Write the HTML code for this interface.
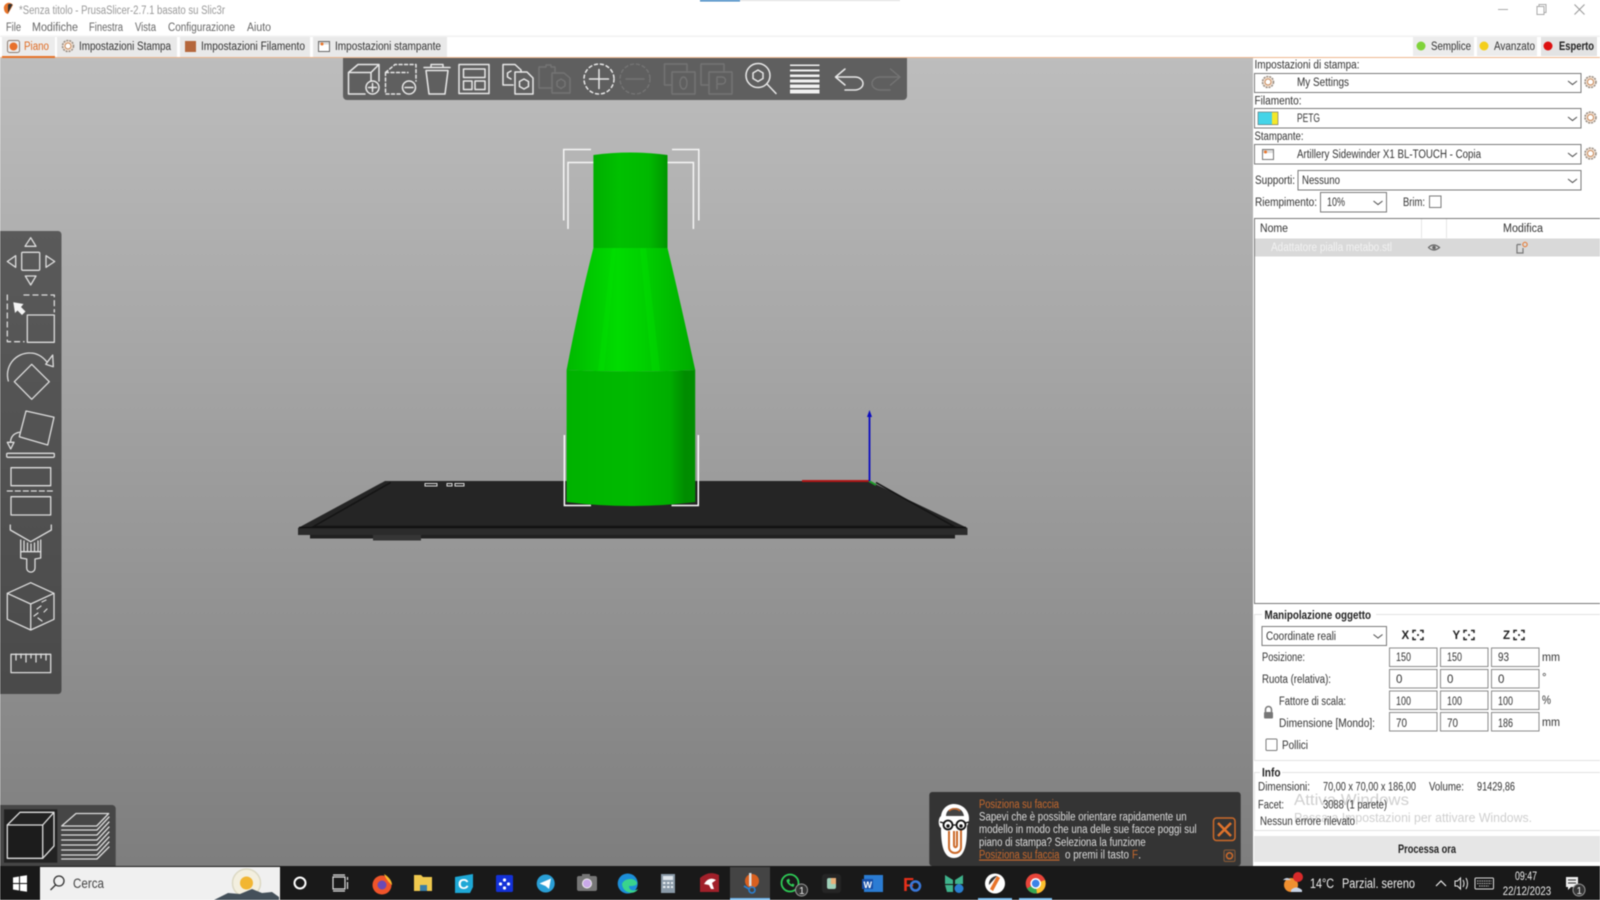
<!DOCTYPE html>
<html><head><meta charset="utf-8"><title>PrusaSlicer</title>
<style>
html,body{margin:0;padding:0;background:#fff;width:1600px;height:900px;overflow:hidden}
svg{display:block;filter:blur(.4px)}
text{font-family:"Liberation Sans",sans-serif;font-size:11.5px;fill:#333}
.m{fill:#666}
.b{font-weight:bold;fill:#222}
.n{fill:#ddd}
.o{fill:#c8692c}
.tb{fill:#eee;font-size:13.5px}
.w{fill:none;stroke:#e8e8e8;stroke-width:1.5;stroke-linejoin:round;stroke-linecap:round}
.d{fill:none;stroke:#747474;stroke-width:1.4;stroke-linejoin:round;stroke-linecap:round}
.l{fill:none;stroke:#ddd;stroke-width:1.3;stroke-linejoin:round;stroke-linecap:round}
.ib{fill:#fff;stroke:#8a8a8a;stroke-width:1}
.cb{fill:#fff;stroke:#7a7a7a;stroke-width:1}
.ch{fill:none;stroke:#555;stroke-width:1.1}
</style></head><body>
<svg width="1600" height="900" viewBox="0 0 1600 900" xmlns="http://www.w3.org/2000/svg">
<defs>
<linearGradient id="bg" x1="0" y1="0" x2="0" y2="1"><stop offset="0" stop-color="#bdbdbd"/><stop offset="1" stop-color="#7e7e7e"/></linearGradient>
<linearGradient id="ltb" x1="0" y1="0" x2="0" y2="1"><stop offset="0" stop-color="#5a5a5a"/><stop offset="1" stop-color="#4a4a4a"/></linearGradient>
<linearGradient id="c1"><stop offset="0" stop-color="#00ae00"/><stop offset=".35" stop-color="#00c000"/><stop offset=".75" stop-color="#00b800"/><stop offset=".93" stop-color="#00a000"/><stop offset="1" stop-color="#009400"/></linearGradient>
<linearGradient id="c2"><stop offset="0" stop-color="#00b800"/><stop offset=".22" stop-color="#00cc00"/><stop offset=".4" stop-color="#00dc00"/><stop offset=".6" stop-color="#00d000"/><stop offset=".85" stop-color="#00b800"/><stop offset="1" stop-color="#00aa00"/></linearGradient>
<linearGradient id="c3"><stop offset="0" stop-color="#00b200"/><stop offset=".5" stop-color="#00ba00"/><stop offset=".8" stop-color="#00ae00"/><stop offset=".92" stop-color="#008c00"/><stop offset="1" stop-color="#008e00"/></linearGradient>
<g id="gear"><circle r="5.5" fill="#f3e3d6" stroke="#9a8f85" stroke-width="1.6" stroke-dasharray="2 1"/><circle r="3" fill="#fff" stroke="#c98a5a" stroke-width="1"/></g>
<g id="fit"><path d="M-5 -2V-4.500H-2M2 -4.500H5V-2M5 2V4.500H2M-2 4.500H-5V2" fill="none" stroke="#222" stroke-width="1.500"/><circle r="1" fill="#222"/></g>
</defs>

<rect width="1600" height="900" fill="#fff"/>
<!-- title bar -->
<rect x="700" y="0" width="40" height="1.5" fill="#3b83c0"/><rect x="740" y="0" width="160" height="1" fill="#ddd"/>
<path d="M4 9a5 5 0 0 1 9-4l-5 9a5 5 0 0 1-4-5z" fill="#e8742a"/><path d="M8 4.500a5 5 0 0 1 4.500 0L8 13z" fill="#333"/>
<text x="19" y="14" style="fill:#999" textLength="206" lengthAdjust="spacingAndGlyphs">*Senza titolo - PrusaSlicer-2.7.1 basato su Slic3r</text>
<path d="M1498 9.500h10" stroke="#aaa"/><path d="M1537 6.500h7v8h-7z M1539 6.500v-2h7v8h-2" fill="none" stroke="#aaa"/><path d="M1574.500 4.500l10 10m0-10l-10 10" stroke="#999"/>
<text x="6" y="31" class="m" textLength="15" lengthAdjust="spacingAndGlyphs">File</text>
<text x="32" y="31" class="m" textLength="46" lengthAdjust="spacingAndGlyphs">Modifiche</text>
<text x="89" y="31" class="m" textLength="34" lengthAdjust="spacingAndGlyphs">Finestra</text>
<text x="135" y="31" class="m" textLength="21" lengthAdjust="spacingAndGlyphs">Vista</text>
<text x="168" y="31" class="m" textLength="67" lengthAdjust="spacingAndGlyphs">Configurazione</text>
<text x="247" y="31" class="m" textLength="24" lengthAdjust="spacingAndGlyphs">Aiuto</text>
<rect y="35.500" width="1600" height="1.500" fill="#f2f2f2"/>

<!-- tabs -->
<rect x="2" y="37" width="53" height="20" fill="#ececec"/>
<rect x="57" y="37" width="120" height="20" fill="#e9e9e9"/>
<rect x="180" y="37" width="130" height="20" fill="#e9e9e9"/>
<rect x="313" y="37" width="134" height="20" fill="#e9e9e9"/>
<rect x="1413" y="37" width="61" height="19" fill="#ececec"/>
<rect x="1477" y="37" width="60" height="19" fill="#ececec"/>
<rect x="1541" y="37" width="56" height="19" fill="#e3e3e3"/>
<rect y="57" width="1600" height="1" fill="#eeb78e"/>
<rect x="2" y="56" width="53" height="2" fill="#e8742a"/>
<rect x="7.500" y="40.500" width="12" height="12" rx="2" fill="#eee" stroke="#8a7a70"/><circle cx="13.500" cy="46.500" r="4" fill="#e8702a"/>
<text x="24" y="50" style="fill:#df6a22" textLength="25" lengthAdjust="spacingAndGlyphs">Piano</text>
<use href="#gear" x="68" y="46"/>
<text x="79" y="50" textLength="92" lengthAdjust="spacingAndGlyphs">Impostazioni Stampa</text>
<rect x="185" y="41" width="11" height="11" fill="#b5673c"/>
<text x="201" y="50" textLength="104" lengthAdjust="spacingAndGlyphs">Impostazioni Filamento</text>
<rect x="318.500" y="41.500" width="11" height="10" fill="#fff" stroke="#666"/><rect x="319" y="42" width="10" height="2.500" fill="#ddd"/><circle cx="322" cy="44" r="1.500" fill="#e8742a"/>
<text x="335" y="50" textLength="106" lengthAdjust="spacingAndGlyphs">Impostazioni stampante</text>
<circle cx="1421" cy="46" r="4.500" fill="#7fd33a"/><text x="1431" y="50" textLength="40" lengthAdjust="spacingAndGlyphs">Semplice</text>
<circle cx="1484" cy="46" r="4.500" fill="#f4cf1c"/><text x="1494" y="50" textLength="41" lengthAdjust="spacingAndGlyphs">Avanzato</text>
<circle cx="1548" cy="46" r="4.500" fill="#dd1111"/><text x="1559" y="50" class="b" textLength="35" lengthAdjust="spacingAndGlyphs">Esperto</text>

<!-- viewport -->
<rect x="0" y="58" width="1253" height="808" fill="url(#bg)"/>

<!-- bed -->
<path d="M385 481H869L967.500 528V535H955V538.500H310V535H298V528Z" fill="#252525"/>
<path d="M298 528H967.500V535H298Z" fill="#2b2b2b"/>
<path d="M310 535H955V538.500H310Z" fill="#202020"/>
<path d="M390.700 482.500L313.500 526.500H954L876 482.500" fill="none" stroke="#141414" stroke-width="1.500"/>
<path d="M299 527.500H966" stroke="#111" stroke-width="1.500"/>
<rect x="373" y="535" width="48" height="5.500" fill="#353535"/>
<path d="M425 483.500H437V486H425ZM447 483.500H452V486H447ZM455 483.500H464V486H455Z" fill="none" stroke="#ddd" stroke-width="1"/>

<!-- axes -->
<path d="M802 481H869" stroke="#b01616" stroke-width="2"/>
<path d="M869 481L876 485" stroke="#1f9a2a" stroke-width="2"/>
<path d="M869.500 481V414" stroke="#0c0cc0" stroke-width="1.800"/>
<path d="M869.500 410L872 417H867Z" fill="#0c0cc0"/>

<!-- back brackets -->
<g fill="none" stroke="#f6f6f6" stroke-width="1.500">
<path d="M563.700 220.500V149.500H591"/><path d="M568 229V162.500H594"/>
<path d="M698.800 220.500V149.500H672"/><path d="M693.400 229V162.500H667"/>
</g>

<!-- model -->
<path d="M593.400 248V155Q630.500 150 667.500 155V248Z" fill="url(#c1)"/>
<path d="M593.400 248H667.500Q680 300 695.200 370Q631 373 566.600 370Q580 300 593.400 248Z" fill="url(#c2)"/>
<path d="M612 248L598 371H604L616 248ZM640 248L652 371H660L646 248Z" fill="#00e400" fill-opacity=".35"/>
<path d="M566.600 370Q631 373 695.200 370V502Q631 510 566.600 502Z" fill="url(#c3)"/>

<!-- front brackets -->
<g fill="none" stroke="#fff" stroke-width="1.500">
<path d="M564.400 435V505.500H591"/><path d="M698.300 435V505.500H671.500"/>
</g>

<!-- top toolbar -->
<path d="M343 58H907V96a4 4 0 0 1-4 4H347a4 4 0 0 1-4-4Z" fill="#5f5f5f"/>
<g class="w">
<path d="M348.500 72.500L358 64.500H379V81M348.500 72.500H371L379 64.500M371 72.500V81M348.500 72.500V94H365"/>
<circle cx="372.500" cy="87.500" r="6.500"/><path d="M368.500 87.500h8M372.500 83.500v8"/>
<path stroke-dasharray="3 2.500" d="M385.500 72.500L395 64.500H416V81M385.500 72.500V94H402M385.500 72.500H408"/>
<circle cx="409" cy="87.500" r="6.500"/><path d="M405 87.500h8"/>
<path d="M424 67.500H450M431 67V64.500H443V67M426 70.500L429 94H445L448 70.500Z"/>
<rect x="459" y="64.500" width="30" height="29"/><rect x="463.500" y="69" width="21.500" height="8.500"/><rect x="463.500" y="81" width="8.500" height="8.500"/><rect x="475" y="81" width="10" height="8.500"/>
<path d="M503 64.500H515L521 70V72M503 64.500V85H513"/><path d="M515 72H527L533 78V94H515Z"/>
<path d="M524 79L528.500 81.500V86.500L524 89L519.500 86.500V81.500Z"/><path d="M511 71L507.500 73V77L511 79"/>
<circle cx="599" cy="79" r="15" stroke-dasharray="3 3"/><path d="M589.500 79H608.500M599 69.500V88.500"/>
<circle cx="758" cy="75.500" r="12"/><path d="M758 70L763 73V78.500L758 81.500L753 78.500V73ZM767 84L776 93.500"/>
<path d="M835.500 77L845 69M835.500 77L845 85M836 77H855A8 6.500 0 0 1 855 90H845"/>
</g>
<g fill="#f2f2f2">
<rect x="790" y="64.500" width="29.500" height="1.500"/><rect x="790" y="69.500" width="29.500" height="2"/><rect x="790" y="74.500" width="29.500" height="2.500"/><rect x="790" y="79.500" width="29.500" height="3"/><rect x="790" y="84.500" width="29.500" height="3.500"/><rect x="790" y="89.500" width="29.500" height="4"/>
</g>
<g class="d">
<path d="M543 67H539V88H552M555 73V67H551V65H546V67H543"/><path d="M552 73H564L570 78V93H552Z"/><path d="M561 79L565 81.500V86L561 88.500L557 86V81.500Z"/>
<circle cx="635" cy="79" r="15" stroke-dasharray="3 3"/><path d="M626 79H644"/>
<path d="M672 85H664.500V64H687V72"/><rect x="672" y="72" width="23" height="22"/><ellipse cx="683.500" cy="83" rx="3.500" ry="6"/>
<path d="M709 85H701V64H724V72"/><rect x="709" y="72" width="23" height="22"/><path d="M717 89V77H722A3 3 0 0 1 722 84H717"/>
<path d="M900 77L890.500 69M900 77L890.500 85M899.500 77H880A8 6.500 0 0 0 880 90H890"/>
</g>

<!-- left toolbar -->
<path d="M0 231H58a3.500 3.500 0 0 1 3.500 3.500V690.500a3.500 3.500 0 0 1-3.500 3.500H0Z" fill="url(#ltb)"/>
<g class="l">
<rect x="21.700" y="252.300" width="18" height="18" rx="1"/>
<path d="M30.700 237.700L36 246.300H25ZM25.300 276H36L30.700 285ZM15.700 255.700V267.300L7.300 261.500ZM46 255.700V267.300L54.700 261.500Z"/>
<path stroke-dasharray="5 4" d="M24 295H54.300V312M7.300 295V341.700H24"/>
<rect x="27.300" y="315" width="27" height="27.300"/>
<path d="M8.300 381A22 22 0 0 1 30 353C37 353 42 356 46.700 361.700"/><path d="M45.700 364.300L52.700 355L53.300 366.700Z"/>
<path d="M31.700 364.300L49.300 381.700L31.700 399.300L14.300 381.700Z"/>
<path d="M26 411L54 417.300L47.700 445L19.300 436.700Z"/><path d="M19.300 432.300Q11 434 10.500 442"/><path d="M7.300 442.300H14L10.700 449Z"/><rect x="6.700" y="453.300" width="47.600" height="4" rx="1"/>
<rect x="11" y="467.700" width="39.700" height="18"/><path d="M7.300 491H53.300" stroke-dasharray="5 3"/><rect x="11" y="496.700" width="39.700" height="18.300"/>
<path d="M10.300 525V530L30.700 541.700L51.300 530V525"/><path d="M20.700 540V551.700H40.700V540M24 541V551M27.500 543V551M31 544V551M34.500 543V551M38 541V551"/>
<path d="M20.700 551.700V558L26.700 559V568A4 4 0 0 0 35 568V559L40.700 558V551.700"/>
<path d="M30.700 582.700L54 593.300V619.300L30.700 630L7.300 619.300V593.300ZM7.300 593.300L30.700 604L54 593.300M30.700 604V630"/>
<path d="M46 600L42 602M41 606L37 609M38 613L34 616M38 618L42 621M44 612L47 609" stroke-width="1.200"/>
<rect x="11" y="654.300" width="39.700" height="18.300"/><path d="M16 654V660M21 654V658M26 654V662M31 654V658M36 654V662M41 654V658M46 654V660"/>
</g>
<path d="M13.300 302.300L23.500 304L21 307L25.500 311.500L22 315L17.500 310.500L15 313Z" fill="#f4f4f4"/>

<!-- bottom-left -->
<path d="M0 805H112a3.700 3.700 0 0 1 3.700 3.700V866H0Z" fill="#464646"/>
<rect x="4" y="809.300" width="53.300" height="53.400" fill="#222"/>
<g class="l">
<path d="M7.300 825H42.700V858.300H7.300Z" fill="#1c1c1c"/><path d="M7.300 825L20 812.300H54L42.700 825M54 812.300V846L42.700 858.300"/>
<path d="M61.700 826L76 813.500H108.700L96.700 826Z"/>
<path d="M61.700 830H97L109 817M61.700 835H97L109 822M61.700 840H97L109 827M61.700 845H97L109 832M61.700 850H97L109 837M61.700 855H97L109 842M61.700 859H97L109 847"/>
</g>

<!-- notification -->
<rect x="929.300" y="792" width="311.400" height="74" rx="3" fill="#343434"/>
<path d="M954 804c9 0 15 7 15 14 0 4-1 6-2 8 0 12 0 32-13 32-11 0-13-14-13-30-3-2-3-10 0-12 1-7 6-12 13-12z" fill="#fff"/>
<path d="M946 816c0-5 4-8 9-8s8 3 9 8z" fill="#444"/><path d="M949 811c3-3 8-3 11 0" stroke="#c8692c" stroke-width="1.500" fill="none"/>
<path d="M949 831v16c0 8 12 8 12 0v-20M954 831v14c0 3 3 3 3 0v-14" fill="none" stroke="#cc6a2a" stroke-width="2"/>
<circle cx="948" cy="825" r="4.500" fill="#fff" stroke="#111" stroke-width="1.800"/><circle cx="961" cy="825" r="4.500" fill="#fff" stroke="#111" stroke-width="1.800"/><circle cx="948" cy="826" r="1.700" fill="#111"/><circle cx="961" cy="826" r="1.700" fill="#111"/><path d="M940 822l4 1M952.500 825h4M965 823l4-1" stroke="#111" stroke-width="1.300"/>
<text x="979" y="808" class="o" textLength="80" lengthAdjust="spacingAndGlyphs">Posiziona su faccia</text>
<text x="979" y="820.500" class="n" textLength="207.700" lengthAdjust="spacingAndGlyphs">Sapevi che è possibile orientare rapidamente un</text>
<text x="979" y="833" class="n" textLength="217.700" lengthAdjust="spacingAndGlyphs">modello in modo che una delle sue facce poggi sul</text>
<text x="979" y="846" class="n" textLength="166.700" lengthAdjust="spacingAndGlyphs">piano di stampa? Seleziona la funzione</text>
<text x="979" y="858.500" class="o" text-decoration="underline" textLength="80.500" lengthAdjust="spacingAndGlyphs">Posiziona su faccia</text>
<text x="1065" y="858.500" class="n" textLength="64" lengthAdjust="spacingAndGlyphs">o premi il tasto</text>
<text x="1132" y="858.500" class="o" textLength="6" lengthAdjust="spacingAndGlyphs">F</text><text x="1138" y="858.500" class="n">.</text>
<rect x="1213.500" y="818" width="21.500" height="22.500" rx="3" fill="none" stroke="#cc6a2a" stroke-width="1.500"/>
<path d="M1218 823l13 13m0-13l-13 13" stroke="#e0732c" stroke-width="2.500"/>
<rect x="1224" y="850" width="11" height="11.500" rx="1.500" fill="#3a3a3a" stroke="#8a5a36"/><circle cx="1229.500" cy="855.800" r="3" fill="none" stroke="#cc6a2a" stroke-width="1.500"/>

<!-- right panel -->
<rect x="1253.500" y="58" width="346.500" height="808" fill="#fff"/>
<text x="1254.500" y="68.500" textLength="105" lengthAdjust="spacingAndGlyphs">Impostazioni di stampa:</text>
<rect x="1254.500" y="73.500" width="326.500" height="19" class="cb"/>
<use href="#gear" x="1268" y="82"/>
<text x="1297" y="86" textLength="52" lengthAdjust="spacingAndGlyphs">My Settings</text>
<path d="M1568 81l4.500 3.500 4.500-3.500" class="ch"/>
<use href="#gear" x="1590.500" y="82"/>

<text x="1254.500" y="104.500" textLength="47" lengthAdjust="spacingAndGlyphs">Filamento:</text>
<rect x="1254.500" y="108.500" width="326.500" height="19.500" class="cb"/>
<rect x="1258" y="112" width="14" height="12.700" fill="#45d4e8"/><rect x="1272" y="112" width="6" height="12.700" fill="#f4e82a"/><rect x="1258" y="112" width="20" height="12.700" fill="none" stroke="#666" stroke-width=".6"/>
<text x="1297" y="122" textLength="23" lengthAdjust="spacingAndGlyphs">PETG</text>
<path d="M1568 117l4.500 3.500 4.500-3.500" class="ch"/>
<use href="#gear" x="1590.500" y="117.500"/>

<text x="1254.500" y="140" textLength="49" lengthAdjust="spacingAndGlyphs">Stampante:</text>
<rect x="1254.500" y="144.500" width="326.500" height="19.500" class="cb"/>
<rect x="1262.500" y="149.500" width="11" height="10" fill="#fff" stroke="#777"/><rect x="1263" y="150" width="10" height="3" fill="#ddd"/><circle cx="1265.500" cy="152" r="1.500" fill="#e8742a"/>
<text x="1297" y="158" textLength="184" lengthAdjust="spacingAndGlyphs">Artillery Sidewinder X1 BL-TOUCH - Copia</text>
<path d="M1568 153l4.500 3.500 4.500-3.500" class="ch"/>
<use href="#gear" x="1590.500" y="153.500"/>

<text x="1255" y="184" textLength="40" lengthAdjust="spacingAndGlyphs">Supporti:</text>
<rect x="1298" y="170.500" width="283" height="19.500" class="cb"/>
<text x="1302" y="184" textLength="38" lengthAdjust="spacingAndGlyphs">Nessuno</text>
<path d="M1568 179l4.500 3.500 4.500-3.500" class="ch"/>

<text x="1255" y="206" textLength="62" lengthAdjust="spacingAndGlyphs">Riempimento:</text>
<rect x="1320.500" y="192.500" width="66" height="19.500" class="cb"/>
<text x="1327" y="206" textLength="18" lengthAdjust="spacingAndGlyphs">10%</text>
<path d="M1373.500 201l4.500 3.500 4.500-3.500" class="ch"/>
<text x="1403" y="206" textLength="22" lengthAdjust="spacingAndGlyphs">Brim:</text>
<rect x="1429.500" y="196" width="11.500" height="11.500" class="cb"/>

<!-- object list -->
<rect x="1254.500" y="218.500" width="346" height="385" fill="#fff" stroke="#777"/>
<path d="M1421.500 219V238M1446.500 219V238" stroke="#e6e6e6"/>
<text x="1260" y="232" textLength="28" lengthAdjust="spacingAndGlyphs">Nome</text>
<text x="1503" y="232" textLength="40" lengthAdjust="spacingAndGlyphs">Modifica</text>
<rect x="1255" y="238.500" width="345" height="18" fill="#d9d9d9"/>
<text x="1271" y="251" style="fill:#f2f2f2" textLength="121" lengthAdjust="spacingAndGlyphs">Adattatore pialla metabo.stl</text>
<path d="M1428.500 247.500q5-5 11 0q-6 5-11 0z" fill="none" stroke="#666" stroke-width="1.200"/><circle cx="1434" cy="247.500" r="1.800" fill="#666"/>
<path d="M1517 244.500h4M1517 244.500v8.500h6v-5" fill="none" stroke="#777" stroke-width="1.200"/><circle cx="1525" cy="244.500" r="2.200" fill="none" stroke="#e8742a"/>

<!-- manipulation -->
<rect x="1254.500" y="614.500" width="346" height="146" fill="none" stroke="#e2e2e2"/>
<rect x="1262" y="608" width="114" height="12" fill="#fff"/>
<text x="1264.500" y="619" class="b" textLength="106.500" lengthAdjust="spacingAndGlyphs">Manipolazione oggetto</text>
<rect x="1262" y="626.500" width="124.500" height="19" class="cb"/>
<text x="1266" y="640" textLength="70" lengthAdjust="spacingAndGlyphs">Coordinate reali</text>
<path d="M1373.500 634.500l4.500 3.500 4.500-3.500" class="ch"/>
<text x="1401.500" y="639" class="b">X</text><use href="#fit" x="1418" y="635"/>
<text x="1452.500" y="639" class="b">Y</text><use href="#fit" x="1469" y="635"/>
<text x="1503" y="639" class="b">Z</text><use href="#fit" x="1519" y="635"/>
<g>
<rect x="1389.500" y="648" width="47.500" height="18.500" class="ib"/><rect x="1440.500" y="648" width="47.500" height="18.500" class="ib"/><rect x="1491.500" y="648" width="47.500" height="18.500" class="ib"/>
<rect x="1389.500" y="669.500" width="47.500" height="18.500" class="ib"/><rect x="1440.500" y="669.500" width="47.500" height="18.500" class="ib"/><rect x="1491.500" y="669.500" width="47.500" height="18.500" class="ib"/>
<rect x="1389.500" y="691" width="47.500" height="18.500" class="ib"/><rect x="1440.500" y="691" width="47.500" height="18.500" class="ib"/><rect x="1491.500" y="691" width="47.500" height="18.500" class="ib"/>
<rect x="1389.500" y="712.500" width="47.500" height="18.500" class="ib"/><rect x="1440.500" y="712.500" width="47.500" height="18.500" class="ib"/><rect x="1491.500" y="712.500" width="47.500" height="18.500" class="ib"/>
</g>
<text x="1262" y="661" textLength="43" lengthAdjust="spacingAndGlyphs">Posizione:</text>
<text x="1396" y="661" textLength="15" lengthAdjust="spacingAndGlyphs">150</text><text x="1447" y="661" textLength="15" lengthAdjust="spacingAndGlyphs">150</text><text x="1498" y="661" textLength="11" lengthAdjust="spacingAndGlyphs">93</text><text x="1542" y="661" textLength="18" lengthAdjust="spacingAndGlyphs">mm</text>
<text x="1262" y="683" textLength="69" lengthAdjust="spacingAndGlyphs">Ruota (relativa):</text>
<text x="1396" y="683">0</text><text x="1447" y="683">0</text><text x="1498" y="683">0</text><text x="1542" y="681">°</text>
<text x="1279" y="705" textLength="67" lengthAdjust="spacingAndGlyphs">Fattore di scala:</text>
<text x="1396" y="705" textLength="15" lengthAdjust="spacingAndGlyphs">100</text><text x="1447" y="705" textLength="15" lengthAdjust="spacingAndGlyphs">100</text><text x="1498" y="705" textLength="15" lengthAdjust="spacingAndGlyphs">100</text><text x="1542" y="704" textLength="9" lengthAdjust="spacingAndGlyphs">%</text>
<text x="1279" y="727" textLength="96" lengthAdjust="spacingAndGlyphs">Dimensione [Mondo]:</text>
<text x="1396" y="727" textLength="11" lengthAdjust="spacingAndGlyphs">70</text><text x="1447" y="727" textLength="11" lengthAdjust="spacingAndGlyphs">70</text><text x="1498" y="727" textLength="15" lengthAdjust="spacingAndGlyphs">186</text><text x="1542" y="726" textLength="18" lengthAdjust="spacingAndGlyphs">mm</text>
<rect x="1264" y="712" width="9" height="6.500" rx="1" fill="#777"/><path d="M1265.500 712v-2.500a3 3 0 0 1 6 0v2.500" fill="none" stroke="#777" stroke-width="1.500"/>
<rect x="1266" y="739" width="11" height="11.500" rx="1" class="cb"/>
<text x="1282" y="749" textLength="26" lengthAdjust="spacingAndGlyphs">Pollici</text>

<!-- info -->
<rect x="1254.500" y="772.500" width="346" height="58" fill="none" stroke="#e2e2e2"/>
<rect x="1260" y="766" width="22" height="12" fill="#fff"/>
<text x="1262" y="776.500" class="b" textLength="18.500" lengthAdjust="spacingAndGlyphs">Info</text>
<text x="1258" y="790.500" textLength="52" lengthAdjust="spacingAndGlyphs">Dimensioni:</text>
<text x="1323" y="790.500" textLength="93" lengthAdjust="spacingAndGlyphs">70,00 x 70,00 x 186,00</text>
<text x="1429" y="790.500" textLength="35" lengthAdjust="spacingAndGlyphs">Volume:</text>
<text x="1477" y="790.500" textLength="38" lengthAdjust="spacingAndGlyphs">91429,86</text>
<text x="1294" y="805" style="font-size:16px;fill:#cfcfcf" textLength="115" lengthAdjust="spacingAndGlyphs">Attiva Windows</text>
<text x="1294" y="822" style="font-size:13px;fill:#cfcfcf" textLength="238" lengthAdjust="spacingAndGlyphs">Passa a Impostazioni per attivare Windows.</text>
<text x="1258" y="808.500" textLength="26" lengthAdjust="spacingAndGlyphs">Facet:</text>
<text x="1323" y="808.500" textLength="64" lengthAdjust="spacingAndGlyphs">3088 (1 parete)</text>
<text x="1260" y="825" textLength="95" lengthAdjust="spacingAndGlyphs">Nessun errore rilevato</text>
<rect x="1254" y="836" width="346" height="26" fill="#e6e6e6"/>
<text x="1398" y="853" class="b" textLength="58" lengthAdjust="spacingAndGlyphs">Processa ora</text>

<!-- taskbar -->
<rect y="866" width="1600" height="34" fill="#191919"/>
<path d="M13 877.500L19 876.500V883H13ZM20 876.300L27 875.300V883H20ZM13 884H19V890.500L13 889.500ZM20 884H27V891.700L20 890.700Z" fill="#fff"/>
<rect x="40" y="867" width="240" height="33" fill="#f0f0f0"/>
<circle cx="59" cy="881" r="5" fill="none" stroke="#333" stroke-width="1.300"/><path d="M55.500 885L50.500 890" stroke="#333" stroke-width="1.300"/>
<text x="73" y="888" style="font-size:14px;fill:#444" textLength="31" lengthAdjust="spacingAndGlyphs">Cerca</text>
<circle cx="246.500" cy="883" r="14" fill="#f3efdf" stroke="#dcd9c4" stroke-width="1.500"/><circle cx="246.500" cy="883" r="6.500" fill="#f2b632"/>
<path d="M214 900L228 893L240 894L252 889L262 893L272 892L279 897V900Z" fill="#44505a"/>
<circle cx="300" cy="883" r="5.500" fill="none" stroke="#fff" stroke-width="2"/>
<path d="M333 877H345V889H333Z" fill="none" stroke="#ddd" stroke-width="1.200"/><path d="M333 875H345M333 891H345M347.500 877V880M347.500 882V889" stroke="#ddd" stroke-width="1.200"/>
<!-- firefox -->
<circle cx="382" cy="885" r="9.500" fill="#f0542a"/><path d="M384 874c5 3 8 7 8 11-3-2-6-6-8-11z" fill="#f9b82a"/><circle cx="382" cy="885" r="4.500" fill="#6b4ab5"/>
<!-- folder -->
<path d="M414 875H421L423 877H432V891H414Z" fill="#f0c94e"/><rect x="420" y="885" width="7" height="6" fill="#3a7ea8"/>
<!-- C -->
<path d="M455 877L473 874V887L470 893H455Z" fill="#1ea8d6"/><text x="458" y="889" style="font-size:15px;font-weight:bold;fill:#fff">C</text>
<!-- blue -->
<rect x="496" y="875" width="17" height="17" rx="1.500" fill="#1331d8"/><circle cx="504.500" cy="880" r="1.600" fill="#fff"/><circle cx="500.500" cy="884" r="1.600" fill="#fff"/><circle cx="508.500" cy="884" r="1.600" fill="#fff"/><circle cx="504.500" cy="888" r="1.600" fill="#fff"/>
<!-- telegram -->
<circle cx="545.700" cy="883.500" r="9" fill="#2a9fd6"/><path d="M539.500 883.500L551 878.500L549 889L545.500 886Z" fill="#fff"/>
<!-- camera -->
<rect x="577" y="876" width="20" height="15" rx="2" fill="#777"/><rect x="582" y="874" width="8" height="3" fill="#777"/><circle cx="587" cy="883.500" r="4.500" fill="#c9a9e8" stroke="#eee"/>
<!-- edge -->
<circle cx="627.700" cy="883.500" r="10" fill="#1c8ed8"/><path d="M622 884c2-6 13-7 15-1 0 3-5 3-8 3 0 4 4 6 9 3-3 6-15 5-16-5z" fill="#39d48c"/>
<!-- calc -->
<rect x="661" y="874" width="14" height="19" fill="#8a9aa8"/><rect x="663" y="876" width="10" height="4" fill="#dfe6ec"/><path d="M663 882h2.500v2h-2.500zM667 882h2.500v2h-2.500zM671 882h2v2h-2zM663 886h2.500v2h-2.500zM667 886h2.500v2h-2.500zM671 886h2v2h-2z" fill="#e8eef2"/>
<!-- red app -->
<path d="M700 878Q709 870 719 875V892H700Z" fill="#a0202a"/><path d="M704 884q5-8 12-4l-4 3 2 6h-3l-2-4z" fill="#fff"/>
<!-- active -->
<rect x="730" y="867" width="40" height="31" fill="#444"/><rect x="730" y="898" width="40" height="2" fill="#76b9ed"/>
<circle cx="752" cy="881" r="7" fill="#d9601f"/><path d="M749 873h2.500v13h-2.500z" fill="#ddd"/><circle cx="752" cy="890" r="3" fill="none" stroke="#2a7fd0" stroke-width="1.600"/><path d="M744 886l5 3" stroke="#2a7fd0" stroke-width="1.800"/>
<!-- whatsapp -->
<circle cx="790" cy="883" r="8.500" fill="none" stroke="#2ecb56" stroke-width="1.800"/><path d="M786.500 880c0 3 3 6 7 7l1-2.500-2-1-1 1c-1-.5-2-1.500-2.500-2.500l1-1-1-2.500z" fill="#2ecb56"/>
<circle cx="801.500" cy="890" r="6" fill="#333" stroke="#999"/><text x="799" y="894" style="font-size:10px;fill:#eee">1</text>
<!-- small app -->
<rect x="822" y="874" width="19" height="19" rx="3" fill="#252525"/><rect x="827" y="878" width="9" height="11" rx="2" fill="#9fd0b8"/><rect x="831" y="878" width="5" height="6" fill="#e8b07a"/>
<!-- word -->
<rect x="864" y="875" width="19" height="17" fill="#2b7cd3"/><rect x="862" y="879" width="11" height="10" fill="#174ea6"/><text x="863.500" y="888" style="font-size:9px;font-weight:bold;fill:#fff">W</text>
<!-- Fo -->
<text x="903" y="891" style="font-size:18px;font-weight:bold;fill:#e8301a" textLength="9">F</text><circle cx="915.500" cy="886" r="4.500" fill="none" stroke="#3a78d8" stroke-width="2.500"/>
<!-- butterfly -->
<path d="M945 875L953 880V884L945 884ZM963 875V884H955V880ZM945 885H953V892H947Z" fill="#3fb38c"/><circle cx="959" cy="888.500" r="4.500" fill="#2a7fd0"/>
<!-- slicer logo -->
<circle cx="995" cy="883.500" r="10" fill="#fff"/><path d="M990 889L997 876L1000 878L993 891Z" fill="#e8742a"/><path d="M997 876a8 8 0 0 0-8 9z" fill="#333"/>
<rect x="978" y="898" width="34" height="2" fill="#76b9ed"/>
<!-- chrome -->
<circle cx="1035.700" cy="883.500" r="10" fill="#e8453a"/><path d="M1035.700 883.500L1027 888.500A10 10 0 0 0 1037 893.400Z" fill="#34a853"/><path d="M1035.700 883.500L1045 880A10 10 0 0 1 1037 893.400Z" fill="#fbc02d"/><circle cx="1035.700" cy="883.500" r="4.600" fill="#3b82e8" stroke="#fff" stroke-width="1.500"/>
<rect x="1019" y="898" width="33" height="2" fill="#76b9ed"/>
<!-- tray -->
<circle cx="1291" cy="885" r="7" fill="#f09030"/><circle cx="1298" cy="877" r="5" fill="#d82a2a"/><path d="M1283 880q4-4 8 0zM1291 890q5-5 11 0v2h-11z" fill="#c9d4e6"/>
<text x="1310" y="888" class="tb" textLength="24" lengthAdjust="spacingAndGlyphs">14°C</text>
<text x="1342" y="888" class="tb" textLength="73" lengthAdjust="spacingAndGlyphs">Parzial. sereno</text>
<path d="M1436 886l5-5 5 5" fill="none" stroke="#eee" stroke-width="1.200"/>
<path d="M1455 881h2.500l3-3v11l-3-3h-2.500z M1463 880q2 3.500 0 7M1466 878q3 5.500 0 11" fill="none" stroke="#eee"/>
<rect x="1475" y="878" width="18.500" height="11" rx="1" fill="none" stroke="#ddd"/><path d="M1477 881h14.500M1477 883.500h14.500M1479 886h10" stroke="#bbb" stroke-dasharray="1.500 .8"/>
<text x="1515" y="880" style="fill:#eee;font-size:11.500px" textLength="22" lengthAdjust="spacingAndGlyphs">09:47</text>
<text x="1502.700" y="895" style="fill:#eee;font-size:11.500px" textLength="48.500" lengthAdjust="spacingAndGlyphs">22/12/2023</text>
<path d="M1566 877h12v10h-7l-3 3v-3h-2z" fill="#eee"/><path d="M1568 880h8M1568 883h8" stroke="#333"/>
<circle cx="1579" cy="890" r="6" fill="#333" stroke="#999"/><text x="1576.500" y="894" style="font-size:10px;fill:#eee">1</text>
</svg>
</body></html>
